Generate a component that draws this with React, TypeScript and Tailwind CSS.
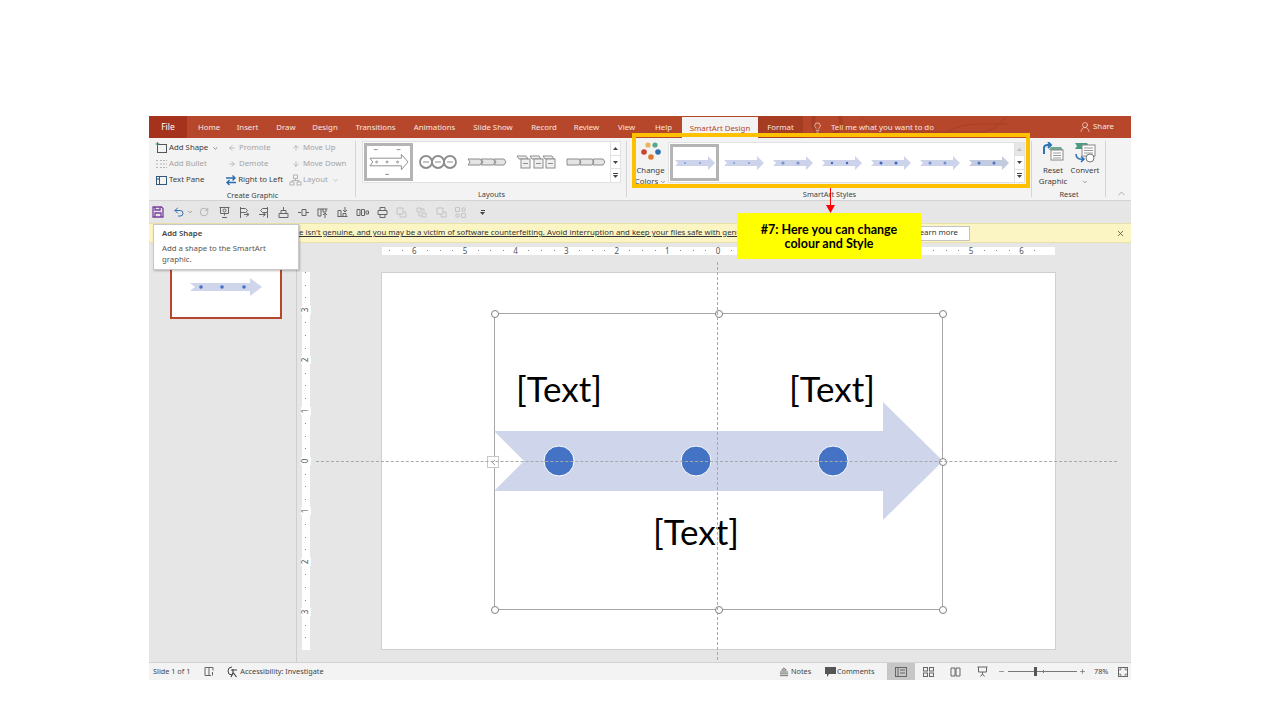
import { ArrowDown, ArrowLeft, ArrowRight, ArrowUp, ChevronDown, ChevronLeft, ChevronUp, Lightbulb, Plus, Minus, RotateCw, Undo2, UserRound, X } from 'lucide-react'

const tabs = [
  { label: 'Home', w: 'w-[38px]' },
  { label: 'Insert', w: 'w-[39px]' },
  { label: 'Draw', w: 'w-[38px]' },
  { label: 'Design', w: 'w-[40px]' },
  { label: 'Transitions', w: 'w-[61px]' },
  { label: 'Animations', w: 'w-[57px]' },
  { label: 'Slide Show', w: 'w-[60px]' },
  { label: 'Record', w: 'w-[42px]' },
  { label: 'Review', w: 'w-[43px]' },
  { label: 'View', w: 'w-[37px]' },
  { label: 'Help', w: 'w-[37px]' },
]

function SmallBox({ color = '#6b6b6b' }: { color?: string }) {
  return (
    <svg width="13" height="12" viewBox="0 0 13 12" fill="none" stroke={color}>
      <rect x="1.5" y="2.5" width="10" height="8" />
      <path d="M4.5 2.5v8M1.5 5h3" />
    </svg>
  )
}

function AddShapeIcon() {
  return (
    <svg width="13" height="12" viewBox="0 0 13 12" fill="none">
      <rect x="2.5" y="2.5" width="9" height="8" stroke="#555" />
      <path d="M2.5 0v4M0.5 2h4" stroke="#2e8b57" />
    </svg>
  )
}

function BulletIcon() {
  return (
    <svg width="13" height="12" viewBox="0 0 13 12" stroke="#b5b5b5" fill="none" strokeDasharray="2 1">
      <path d="M1 2.5h2M5 2.5h7M1 6h2M5 6h7M1 9.5h2M5 9.5h7" />
    </svg>
  )
}

function RtlIcon() {
  return (
    <svg width="12" height="12" viewBox="0 0 12 12" fill="none" stroke="#2b6cb0" strokeWidth="1.4">
      <path d="M1 4h9M7.500 1.500 10 4 7.500 6.500M11 8.500H2M4.500 6 2 8.500 4.500 11" />
    </svg>
  )
}

function LayoutIcon() {
  return (
    <svg width="13" height="12" viewBox="0 0 13 12" fill="none" stroke="#b5b5b5">
      <rect x="4.500" y="1" width="4" height="3.500" />
      <rect x="1" y="8" width="4" height="3" />
      <rect x="8" y="8" width="4" height="3" />
      <path d="M6.500 4.500V6.500M3 8V6.500h7V8" />
    </svg>
  )
}

function RibbonRow({ icon, label, off, chev }: { icon: React.ReactNode; label: string; off?: boolean; chev?: boolean }) {
  return (
    <div className={`flex items-center h-4 gap-[1px] whitespace-nowrap ${off ? 'text-[#a3a3a3]' : 'text-[#3d3d3d]'}`}>
      <span className="w-[13px] flex justify-center">{icon}</span>
      <span>{label}</span>
      {chev && <ChevronDown size={7} className="ml-[3px]" />}
    </div>
  )
}

function GroupLabel({ children }: { children: React.ReactNode }) {
  return <div className="h-[13px] pt-[1px] leading-[13px] text-center text-[#444] text-[7.4px]">{children}</div>
}

function Tri({ up, color = '#444' }: { up?: boolean; color?: string }) {
  return (
    <svg width="5" height="3" viewBox="0 0 5 3">
      <path d={up ? 'M0 3h5L2.500 0z' : 'M0 0h5L2.500 3z'} fill={color} />
    </svg>
  )
}

function Scroller({ disabled }: { disabled?: boolean }) {
  return (
    <div className="w-[10px] flex flex-col border-l border-[#e1e1e1] bg-white h-full">
      <div className={`flex-1 flex items-center justify-center border-b border-[#e1e1e1] ${disabled ? 'bg-[#e6e6e6]' : ''}`}>
        <Tri up color={disabled ? '#bdbdbd' : '#444'} />
      </div>
      <div className="flex-1 flex items-center justify-center border-b border-[#e1e1e1]"><Tri /></div>
      <div className="flex-1 flex flex-col items-center justify-center">
        <div className="w-[5px] h-[1px] bg-[#444] mb-[1px]" />
        <Tri />
      </div>
    </div>
  )
}

function LayoutThumb({ kind }: { kind: number }) {
  const stroke = '#8c8c8c'
  if (kind === 0) {
    return (
      <svg width="40" height="32" viewBox="0 0 42 32" fill="none" stroke={stroke}>
        <path d="M1 12h33V8l7 8-7 8v-4H1l3-4z" />
        <circle cx="8" cy="16" r="1" /><circle cx="19" cy="16" r="1" /><circle cx="30" cy="16" r="1" />
        <path d="M5 3h4M29 3h4M17 29h4" />
      </svg>
    )
  }
  if (kind === 1) {
    return (
      <svg width="40" height="16" viewBox="0 0 40 16" fill="none" stroke={stroke} strokeWidth="1.800">
        <circle cx="8" cy="8" r="6" /><circle cx="20" cy="8" r="6" /><circle cx="32" cy="8" r="6" />
        <path d="M5 8h6M17 8h6M29 8h6" strokeWidth="1" />
      </svg>
    )
  }
  if (kind === 2) {
    return (
      <svg width="40" height="8" viewBox="0 0 40 8" fill="#e4e4e4" stroke={stroke}>
        <path d="M1 1h12l2 3-2 3H1l2-3zM14 1h12l2 3-2 3H14l2-3zM27 1h10l2 3-2 3H27l2-3z" />
      </svg>
    )
  }
  if (kind === 3) {
    return (
      <svg width="40" height="14" viewBox="0 0 40 14" fill="#f0f0f0" stroke={stroke}>
        <path d="M1 1h9l2 3H3zM14 1h9l2 3h-9zM27 1h9l2 3h-9z" />
        <rect x="5" y="4" width="9" height="9" /><rect x="18" y="4" width="9" height="9" /><rect x="30" y="4" width="9" height="9" />
        <path d="M7 8.500h5M20 8.500h5M32 8.500h5" />
      </svg>
    )
  }
  return (
    <svg width="40" height="8" viewBox="0 0 40 8" fill="#e4e4e4" stroke={stroke}>
      <path d="M1 1h12l2 3-2 3H1zM14 1h12l2 3-2 3H14zM27 1h10l2 3-2 3H27z" />
    </svg>
  )
}

function StyleThumb({ dot, r, fill = '#ccd3ea' }: { dot: string; r: number; fill?: string }) {
  return (
    <svg width="40" height="14" viewBox="0 0 40 14">
      <path d="M0 4h33V0l7 7-7 7v-4H0l3-3z" fill={fill} />
      <circle cx="10" cy="7" r={r} fill={dot} />
      <circle cx="25" cy="7" r={r} fill={dot} />
    </svg>
  )
}

const styleThumbs = [
  { dot: '#4472c4', r: 0.8 },
  { dot: '#4472c4', r: 0.8 },
  { dot: '#7d92cc', r: 1.6 },
  { dot: '#3f68b4', r: 1.2 },
  { dot: '#3f68b4', r: 1.500 },
  { dot: '#6e90d0', r: 1.500 },
  { dot: '#4472c4', r: 1.500, fill: '#c3cbe0' },
]

function QatIcon({ d, off }: { d: string; off?: boolean }) {
  return (
    <svg width="13" height="13" viewBox="0 0 13 13" fill="none" stroke={off ? '#c4c4c4' : '#666'}>
      <path d={d} />
    </svg>
  )
}

const qatShapes = [
  { d: 'M1.500 1.500h10M2.500 1.500v6h8v-6M6.500 7.500v2M4 11.500h5M5 4.500a1.500 1.500 0 1 0 3 0 1.500 1.500 0 1 0-3 0', off: false },
  { d: 'M2.500 1v11M2.500 2.500h5l2 2-2 2h-5M6 8.500h5M8.500 6.500l2.500 2-2.500 2', off: false },
  { d: 'M10.500 1v11M10.500 2.500h-5l-2 2 2 2h5M2 8.500h6M6 6.500l2.500 2-2.500 2', off: false },
  { d: 'M6.500 1v3M4 4.500h5v3H4zM2 7.500h9v4H2z', off: false },
  { d: 'M1 6.500h3M5 3.500h4v6H5zM9 6.500h3', off: false },
  { d: 'M1.500 3h10M2 3v7h3V3M7 3v3h3V3M9 12V7M7 9l2-2 2 2', off: false },
  { d: 'M1.500 10.500h10M2 10.500v-6h3v6M7 10.500v-3h3v3M9 1v5M7 4l2 2 2-2', off: false },
  { d: 'M1 3.500h3v6H1zM5.500 3.500h3v6h-3zM10 5h2.500v3H10z', off: false },
  { d: 'M4 1.500h5v3H4zM2 4.500h9v4H2zM4 8.500h5v3H4z', off: false },
  { d: 'M2 2h6v6H2zM8 6h3v5H5V8', off: true },
  { d: 'M2 2h4v4H2zM7 7h4v4H7zM6 3h3v3M4 7v3h3', off: true },
  { d: 'M2 2h6v6H2zM6 8v3h5V6H8', off: true },
  { d: 'M1.500 1.500h4v4h-4zM7.500 7.500h4v4h-4zM8 2h3v3H8zM2 8h3v3H2z', off: true },
]

// 2, 3 and 4 on the right sit under the yellow callout
const hRulerNums = [-6, -5, -4, -3, -2, -1, 0, 1, 5, 6]
const vRulerNums = [-3, -2, -1, 0, 1, 2, 3]
const quarterTicks = Array.from({ length: 52 }, (_, i) => i - 26)

function HRuler() {
  return (
    <div className="relative ml-[84px] mt-[4px] w-[673px] h-[8px] bg-white text-[#555] text-[8px] leading-[8px]">
      {quarterTicks.map((t) => (
        <span key={t} className="absolute top-[3px] w-[1px] h-[1px] bg-[#888]" style={{ left: 336 + t * 12.65 }} />
      ))}
      {hRulerNums.map((n) => (
        <span key={n} className="absolute top-0 w-[10px] -ml-[5px] text-center bg-white" style={{ left: 336 + n * 50.6 }}>
          {Math.abs(n)}
        </span>
      ))}
    </div>
  )
}

function VRuler() {
  return (
    <div className="relative w-[8px] h-[378px] bg-white text-[#555] text-[8px] leading-[8px]">
      {quarterTicks.slice(11, 41).map((t) => (
        <span key={t} className="absolute left-[3px] w-[1px] h-[1px] bg-[#888]" style={{ top: 189 + t * 12.6 }} />
      ))}
      {vRulerNums.map((n) => (
        <span key={n} className="absolute left-0 h-[10px] w-[8px] -mt-[5px] text-center bg-white -rotate-90" style={{ top: 189 + n * 50.4 }}>
          {Math.abs(n)}
        </span>
      ))}
    </div>
  )
}

const handles = [
  'left-[-4px] top-[-4px]',
  'left-[220px] top-[-4px]',
  'left-[444px] top-[-4px]',
  'left-[444px] top-[144px]',
  'left-[-4px] top-[292px]',
  'left-[220px] top-[292px]',
  'left-[444px] top-[292px]',
]

function Diagram() {
  return (
    <div className="absolute left-[112px] top-[40px] w-[449px] h-[297px] border border-[#a6a6a6]">
      <svg width="449" height="297" viewBox="0 0 449 297" className="absolute left-[-1px] top-[-1px]">
        <path d="M0 118h389V89l60 59-60 59v-29H0l30-30z" fill="#cfd5ea" />
        {[65, 202, 339].map((cx) => (
          <circle key={cx} cx={cx} cy="148" r="15" fill="#4472c4" stroke="#fff" strokeWidth="1" />
        ))}
      </svg>
      <span className="absolute left-[2px] top-[52px] w-[124px] text-center text-[35px] leading-[44px] text-black">[Text]</span>
      <span className="absolute left-[275px] top-[52px] w-[124px] text-center text-[35px] leading-[44px] text-black">[Text]</span>
      <span className="absolute left-[139px] top-[195px] w-[124px] text-center text-[35px] leading-[44px] text-black">[Text]</span>
      {handles.map((h) => (
        <span key={h} className={`absolute w-[8px] h-[8px] rounded-full bg-white border border-[#7f7f7f] ${h}`} />
      ))}
      <span className="absolute left-[-8px] top-[142px] w-[12px] h-[12px] bg-white border border-[#c8c8c8] flex items-center justify-center text-[#666]">
        <ChevronLeft size={9} strokeWidth={2} />
      </span>
    </div>
  )
}

export default function App() {
  return (
    <div className="w-[1280px] h-[720px] bg-white pt-[116px] pl-[149px] overflow-hidden" style={{ fontFamily: '"Noto Sans", sans-serif' }}>
      <div className="relative w-[982px] h-[564px] flex flex-col text-[7.8px] bg-[#e6e6e6]">
        {/* title tabs */}
        <div className="relative flex h-[22px] bg-[#b7472a] text-[#f7e6e0] items-stretch overflow-hidden">
          <svg className="absolute left-[650px] top-0" width="340" height="22" viewBox="0 0 340 22" fill="none" stroke="#a63f25">
            <circle cx="28" cy="6" r="14" strokeWidth="4" />
            <path d="M60 -2c10 14 30 18 60 18h60c14 0 20-8 30-18M140 22c10-8 20-14 40-14h30" />
          </svg>
          <div className="relative w-[38px] bg-[#a5321c] text-white text-[8.5px] flex items-center justify-center">File</div>
          <div className="w-[3px]" />
          {tabs.map((t) => (
            <div key={t.label} className={`relative ${t.w} flex items-center justify-center pt-[2px] whitespace-nowrap`}>{t.label}</div>
          ))}
          <div className="relative w-[76px] mt-[1px] bg-[#f3f3f3] text-[#b7472a] flex items-center justify-center pt-[2px] whitespace-nowrap">SmartArt Design</div>
          <div className="relative w-[45px] bg-[#a63d23] flex items-center justify-center pt-[2px]">Format</div>
          <div className="relative flex items-center ml-[9px] pt-[1px] whitespace-nowrap">
            <Lightbulb size={11} strokeWidth={1.3} className="text-white" />
            <span className="ml-[8px]">Tell me what you want to do</span>
          </div>
          <div className="relative flex items-center ml-auto mr-[17px] whitespace-nowrap">
            <UserRound size={12} strokeWidth={1.3} />
            <span className="ml-[2px]">Share</span>
          </div>
        </div>

        {/* ribbon */}
        <div className="flex h-[63px] bg-[#f3f3f3] border-b border-[#d2d2d2]">
          <div className="w-[207px] flex flex-col relative">
            <div className="flex h-[50px] pl-[6px] pt-[2px] gap-[6px]">
              <div className="w-[64px]">
                <RibbonRow icon={<AddShapeIcon />} label="Add Shape" chev />
                <RibbonRow icon={<BulletIcon />} label="Add Bullet" off />
                <RibbonRow icon={<SmallBox color="#33587f" />} label="Text Pane" />
              </div>
              <div className="w-[58px]">
                <RibbonRow icon={<ArrowLeft size={8} />} label="Promote" off />
                <RibbonRow icon={<ArrowRight size={8} />} label="Demote" off />
                <RibbonRow icon={<RtlIcon />} label="Right to Left" />
              </div>
              <div>
                <RibbonRow icon={<ArrowUp size={8} />} label="Move Up" off />
                <RibbonRow icon={<ArrowDown size={8} />} label="Move Down" off />
                <RibbonRow icon={<LayoutIcon />} label="Layout" off chev />
              </div>
            </div>
            <GroupLabel>Create Graphic</GroupLabel>
            <div className="absolute right-0 top-[3px] bottom-[3px] w-[1px] bg-[#d4d4d4]" />
          </div>

          <div className="w-[271px] flex flex-col relative">
            <div className="h-[50px] pl-[6px] pt-[3px]">
              <div className="flex items-center w-[259px] h-[42px] bg-white border border-[#e1e1e1] pl-[1px]">
                <div className="w-[49px] h-[38px] border-[3px] border-[#b4b4b4] flex items-center justify-center"><LayoutThumb kind={0} /></div>
                <div className="w-[49px] flex justify-center"><LayoutThumb kind={1} /></div>
                <div className="w-[49px] flex justify-center"><LayoutThumb kind={2} /></div>
                <div className="w-[50px] flex justify-center"><LayoutThumb kind={3} /></div>
                <div className="w-[49px] flex justify-center"><LayoutThumb kind={4} /></div>
                <div className="ml-auto h-full"><Scroller /></div>
              </div>
            </div>
            <GroupLabel>Layouts</GroupLabel>
            <div className="absolute right-0 top-[3px] bottom-[3px] w-[1px] bg-[#d4d4d4]" />
          </div>

          <div className="w-[405px] flex flex-col relative">
            <div className="flex h-[50px] pl-[6px] pt-[4px]">
              <div className="w-[35px] flex flex-col items-center text-[#3d3d3d] leading-[11px]">
                <svg width="22" height="20" viewBox="0 0 22 20" className="mb-[3px]">
                  <circle cx="8" cy="3" r="2.600" fill="#e9b35a" />
                  <circle cx="15" cy="3" r="2.600" fill="#55a88c" />
                  <circle cx="4" cy="10" r="2.800" fill="#c8442c" />
                  <circle cx="18" cy="10" r="2.800" fill="#2e6fb0" />
                  <circle cx="11" cy="15" r="2.800" fill="#e07a2a" />
                </svg>
                <span>Change</span>
                <span className="flex items-center">Colors<ChevronDown size={6} className="ml-[2px]" /></span>
              </div>
              <div className="flex items-center w-[357px] h-[41px] bg-white border border-[#e1e1e1] pl-[1px]">
                {styleThumbs.map((s, i) => (
                  <div key={i} className={i === 0 ? 'w-[49px] h-[37px] border-[3px] border-[#b4b4b4] flex items-center justify-center' : 'w-[49px] flex justify-center'}>
                    <StyleThumb {...s} />
                  </div>
                ))}
                <div className="ml-auto h-full"><Scroller disabled /></div>
              </div>
            </div>
            <GroupLabel>SmartArt Styles</GroupLabel>
            <div className="absolute right-0 top-[3px] bottom-[3px] w-[1px] bg-[#d4d4d4]" />
          </div>

          <div className="w-[74px] flex flex-col relative">
            <div className="flex h-[50px] text-[#3d3d3d] leading-[11px] pt-[4px] pl-[4px]">
              <div className="w-[34px] flex flex-col items-center">
                <svg width="22" height="21" viewBox="0 0 22 21" className="mb-[2px]" fill="none">
                  <path d="M9 5h10l2 3H7z" fill="#6fa893" />
                  <rect x="9" y="8" width="12" height="10" fill="#fff" stroke="#888" />
                  <path d="M11 11h8M11 13.500h8M11 16h8" stroke="#999" />
                  <path d="M2 12V6c0-2 2-3 4-3h3M6 0 9 3 6 6" stroke="#2f74b5" strokeWidth="2" />
                </svg>
                <span>Reset</span>
                <span>Graphic</span>
              </div>
              <div className="w-[34px] flex flex-col items-center ml-[-2px]">
                <svg width="22" height="21" viewBox="0 0 22 21" className="mb-[2px]" fill="none">
                  <path d="M1 1h12l2 3-2 3H1l2-3z" fill="#4c9a82" />
                  <rect x="8" y="3" width="13" height="11" fill="#fff" stroke="#888" />
                  <path d="M10 6h9M10 8.500h9M10 11h9" stroke="#999" />
                  <circle cx="16" cy="16" r="4" fill="#fff" stroke="#777" />
                  <path d="M2 12c0 4 3 6 8 5M7 14.500 10 17l-3 3" stroke="#2f74b5" strokeWidth="1.600" />
                </svg>
                <span>Convert</span>
                <ChevronDown size={6} className="mt-[3px]" />
              </div>
            </div>
            <GroupLabel>Reset</GroupLabel>
            <div className="absolute right-0 top-[3px] bottom-[3px] w-[1px] bg-[#d4d4d4]" />
          </div>

          <div className="flex-1 flex items-end justify-end pr-[4px] pb-[1px] text-[#555]">
            <ChevronUp size={11} strokeWidth={1} />
          </div>
        </div>

        {/* quick access toolbar */}
        <div className="flex items-center h-[22px] pl-[3px] bg-[#e6e6e6]">
          <svg width="12" height="12" viewBox="0 0 12 12" fill="none" stroke="#7a3fa0" strokeWidth="1.300">
            <path d="M1 1h8.500L11 2.500V11H1z" />
            <path d="M3 1v3h5V1M3 11V7h6v4" />
          </svg>
          <Undo2 size={12} className="ml-[9px] text-[#2f6fb0]" strokeWidth={2} />
          <ChevronDown size={6} className="ml-[2px] text-[#555]" />
          <RotateCw size={10} className="ml-[6px] text-[#a8a8a8]" />
          <div className="flex ml-[9px] gap-[6.700px]">
            {qatShapes.map((q, i) => (
              <QatIcon key={i} d={q.d} off={q.off} />
            ))}
          </div>
          <div className="ml-[13px] flex flex-col items-center text-[#444]">
            <div className="w-[4px] h-[1px] bg-[#444] mb-[1px]" />
            <Tri />
          </div>
        </div>

        {/* license warning */}
        <div className="flex items-center h-[20px] bg-[#fbf5c3] border-y border-[#e9e2a8] pl-[150px] text-[#333] whitespace-nowrap">
          <span className="w-[580px] overflow-hidden"><span className="underline">e isn't genuine, and you may be a victim of software counterfeiting. Avoid interruption and keep your files safe with genui</span></span>
          <span className="w-[91px] h-[15px] bg-white border border-[#c4c4c4] flex items-center justify-end pr-[11px]">Learn more</span>
          <X size={9} strokeWidth={2} className="ml-auto mr-[6px] text-[#444]" />
        </div>

        {/* workspace */}
        <div className="flex flex-1 min-h-0">
          <div className="w-[148px] border-r border-[#cfcfcf] pl-[21px] pt-[13px]">
            <div className="w-[112px] h-[63px] bg-white border-2 border-[#b7472a] flex items-center justify-center pb-[2px]">
              <svg width="72" height="18" viewBox="0 0 72 18">
                <path d="M0 5h60V0l12 9-12 9v-5H0l5-4z" fill="#cfd5ea" />
                <circle cx="11" cy="9" r="1.800" fill="#4472c4" />
                <circle cx="32" cy="9" r="1.800" fill="#4472c4" />
                <circle cx="54" cy="9" r="1.800" fill="#4472c4" />
              </svg>
            </div>
          </div>
          <div className="relative flex-1">
            <div className="pl-[1px]"><HRuler /></div>
            <div className="flex mt-[17px] ml-[5px]">
              <VRuler />
              <div className="relative ml-[71px] w-[675px] h-[378px] bg-white border border-[#d0d0d0]" style={{ fontFamily: 'Lato, sans-serif' }}>
                <Diagram />
              </div>
            </div>
            <div className="absolute left-[19px] top-[218px] w-[801px] border-t border-dashed border-[#a8a8a8]" />
            <div className="absolute left-[420px] top-[19px] h-[398px] border-l border-dashed border-[#a8a8a8]" />
          </div>
        </div>

        {/* status bar */}
        <div className="flex items-center h-[18px] bg-[#f3f3f3] border-t border-[#d2d2d2] text-[#444] text-[7.3px] whitespace-nowrap">
          <span className="ml-[4px]">Slide 1 of 1</span>
          <svg width="11" height="11" viewBox="0 0 11 11" fill="none" stroke="#666" className="ml-[14px]">
            <path d="M1 1.500h4v8H1zM5 1.500h4v3M5 9.500h2M8.500 6v3.500" />
          </svg>
          <svg width="13" height="12" viewBox="0 0 13 12" fill="none" stroke="#444" className="ml-[11px]">
            <path d="M6 1a4 4 0 1 0 0 8" />
            <path d="M5 4h6M7 3v4l-2 4M7.500 7l3 4" strokeWidth="1.200" />
          </svg>
          <span className="ml-[1px]">Accessibility: Investigate</span>

          <div className="ml-auto mr-[3px] flex items-center h-full">
            <svg width="10" height="10" viewBox="0 0 11 10" fill="none" stroke="#666">
              <path d="M5.500 0.500 8 3H3zM1 5h9M1 7h9M1 9h9" />
            </svg>
            <span className="ml-[2px] w-[20px]">Notes</span>
            <svg width="11" height="10" viewBox="0 0 11 10" className="ml-[14px]">
              <path d="M0 0h11v7H4L2 10V7H0z" fill="#555" />
            </svg>
            <span className="ml-[1px] w-[38px]">Comments</span>
            <div className="ml-[12px] w-[28px] h-full bg-[#c6c6c6] flex items-center justify-center">
              <svg width="12" height="10" viewBox="0 0 12 10" fill="none" stroke="#666">
                <rect x="0.500" y="0.500" width="11" height="9" /><path d="M3 0.500v9M5 3h5M5 6h5" />
              </svg>
            </div>
            <svg width="11" height="10" viewBox="0 0 11 10" fill="none" stroke="#666" className="ml-[8px]">
              <rect x="0.500" y="0.500" width="4" height="3.500" /><rect x="6.500" y="0.500" width="4" height="3.500" />
              <rect x="0.500" y="6" width="4" height="3.500" /><rect x="6.500" y="6" width="4" height="3.500" />
            </svg>
            <svg width="11" height="10" viewBox="0 0 11 10" fill="none" stroke="#666" className="ml-[16px]">
              <path d="M1 1h4v8H1zM6 1h4v8H6z" />
            </svg>
            <svg width="11" height="11" viewBox="0 0 11 11" fill="none" stroke="#666" className="ml-[16px]">
              <path d="M0.500 1h10M1.500 1v5h8V1M5.500 6v2M3.500 10.500l2-2.500 2 2.500" />
            </svg>
            <Minus size={7} className="ml-[10px] text-[#555]" />
            <div className="relative ml-[3px] w-[69px] h-[1px] bg-[#777]">
              <span className="absolute left-[26px] top-[-4px] w-[3px] h-[9px] bg-[#555]" />
              <span className="absolute left-[35px] top-[-1px] w-[1px] h-[3px] bg-[#777]" />
            </div>
            <Plus size={7} className="ml-[2px] text-[#555]" />
            <span className="ml-[8px] w-[15px]">78%</span>
            <svg width="10" height="10" viewBox="0 0 10 10" fill="none" stroke="#666" className="ml-[9px]">
              <rect x="0.500" y="0.500" width="9" height="9" /><path d="M2 3.500V2h1.500M6.500 2H8v1.500M8 6.500V8H6.500M3.500 8H2V6.500" />
            </svg>
          </div>
        </div>

        {/* tooltip */}
        <div className="absolute left-[4px] top-[108px] w-[146px] h-[46px] bg-white border border-[#c8c8c8] shadow-[1px_1px_2px_rgba(0,0,0,0.25)] px-[8px] pt-[3px] text-[#555] leading-[11px]">
          <div className="font-semibold text-[#444] mb-[4px]">Add Shape</div>
          <div>Add a shape to the SmartArt graphic.</div>
        </div>

        {/* tutorial annotation */}
        <div className="absolute left-[483px] top-[17px] w-[398px] h-[55px] border-[4px] border-[#ffc000]" />
        <div className="absolute left-[681px] top-[72px] w-[1px] h-[19px] bg-[#ff0000]" />
        <svg className="absolute left-[677px] top-[89px]" width="9" height="8" viewBox="0 0 9 8">
          <path d="M0 0h9L4.500 8z" fill="#ff0000" />
        </svg>
        <div className="absolute left-[588px] top-[97px] w-[184px] h-[46px] pt-[2px] bg-[#ffff00] flex items-center justify-center text-center text-black font-bold text-[12.500px] leading-[14px]" style={{ fontFamily: 'Lato, sans-serif' }}>
          <span>#7: Here you can change<br />colour and Style</span>
        </div>
      </div>
    </div>
  )
}
